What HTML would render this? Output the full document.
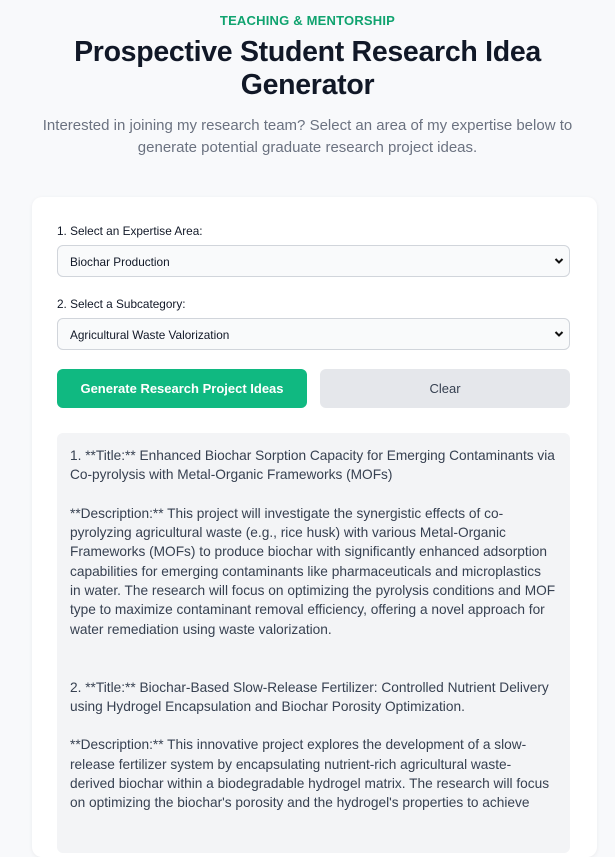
<!DOCTYPE html>
<html><head><meta charset="utf-8"><style>
*{box-sizing:border-box;margin:0;padding:0}
body{width:615px;height:812px;overflow:hidden;background:#f8f9fb;font-family:"Liberation Sans",Arial,sans-serif;color:#111827}
.eyebrow{position:absolute;top:13px;left:0;width:615px;text-align:center;color:#10a36f;font-weight:bold;font-size:13px;letter-spacing:.2px}
h1{position:absolute;top:36px;left:0;width:615px;text-align:center;font-size:28.5px;line-height:33px;font-weight:bold;color:#111827;letter-spacing:-.3px}
.sub{position:absolute;top:115px;left:0;width:615px;text-align:center;font-size:15px;line-height:22px;color:#6b7280}
.card{position:absolute;top:197px;left:32px;width:565px;height:660px;background:#fff;border-radius:10px;box-shadow:0 1px 4px rgba(0,0,0,.06)}
.lbl{position:absolute;left:57px;font-size:11.8px;color:#111827}
.sel{position:absolute;left:57px;width:513px;height:32px;border:1px solid #d1d5db;border-radius:6px;background:#f9fafb;font-size:11.8px;padding:9px 12px;color:#111827}
.sel svg{position:absolute;right:5px;top:11px}
.btn{position:absolute;top:369px;height:39px;border-radius:6px;font-size:13px;font-weight:bold;text-align:center;line-height:39px}
.res{position:absolute;top:433px;left:57px;width:513px;height:420px;background:#f3f4f6;border-radius:6px;padding:13px 13px;font-size:13.7px;line-height:19.3px;color:#374151;white-space:nowrap}
</style></head><body>
<div class="eyebrow">TEACHING &amp; MENTORSHIP</div>
<h1>Prospective Student Research Idea<br>Generator</h1>
<div class="sub">Interested in joining my research team? Select an area of my expertise below to<br>generate potential graduate research project ideas.</div>
<div class="card"></div>
<div class="lbl" style="top:224px">1. Select an Expertise Area:</div>
<div class="sel" style="top:245px">Biochar Production<svg width="10" height="8" viewBox="0 0 10 8"><path d="M1.5 2l3.5 3.5L8.5 2" stroke="#111" stroke-width="2" fill="none"/></svg></div>
<div class="lbl" style="top:297px">2. Select a Subcategory:</div>
<div class="sel" style="top:318px">Agricultural Waste Valorization<svg width="10" height="8" viewBox="0 0 10 8"><path d="M1.5 2l3.5 3.5L8.5 2" stroke="#111" stroke-width="2" fill="none"/></svg></div>
<div class="btn" style="left:57px;width:250px;background:#10b981;color:#fff">Generate Research Project Ideas</div>
<div class="btn" style="left:320px;width:250px;background:#e5e7eb;color:#374151;font-weight:normal">Clear</div>
<div class="res">1. **Title:** Enhanced Biochar Sorption Capacity for Emerging Contaminants via<br>Co-pyrolysis with Metal-Organic Frameworks (MOFs)<br><br>**Description:** This project will investigate the synergistic effects of co-<br>pyrolyzing agricultural waste (e.g., rice husk) with various Metal-Organic<br>Frameworks (MOFs) to produce biochar with significantly enhanced adsorption<br>capabilities for emerging contaminants like pharmaceuticals and microplastics<br>in water. The research will focus on optimizing the pyrolysis conditions and MOF<br>type to maximize contaminant removal efficiency, offering a novel approach for<br>water remediation using waste valorization.<br><br><br>2. **Title:** Biochar-Based Slow-Release Fertilizer: Controlled Nutrient Delivery<br>using Hydrogel Encapsulation and Biochar Porosity Optimization.<br><br>**Description:** This innovative project explores the development of a slow-<br>release fertilizer system by encapsulating nutrient-rich agricultural waste-<br>derived biochar within a biodegradable hydrogel matrix. The research will focus<br>on optimizing the biochar's porosity and the hydrogel's properties to achieve</div>
</body></html>
